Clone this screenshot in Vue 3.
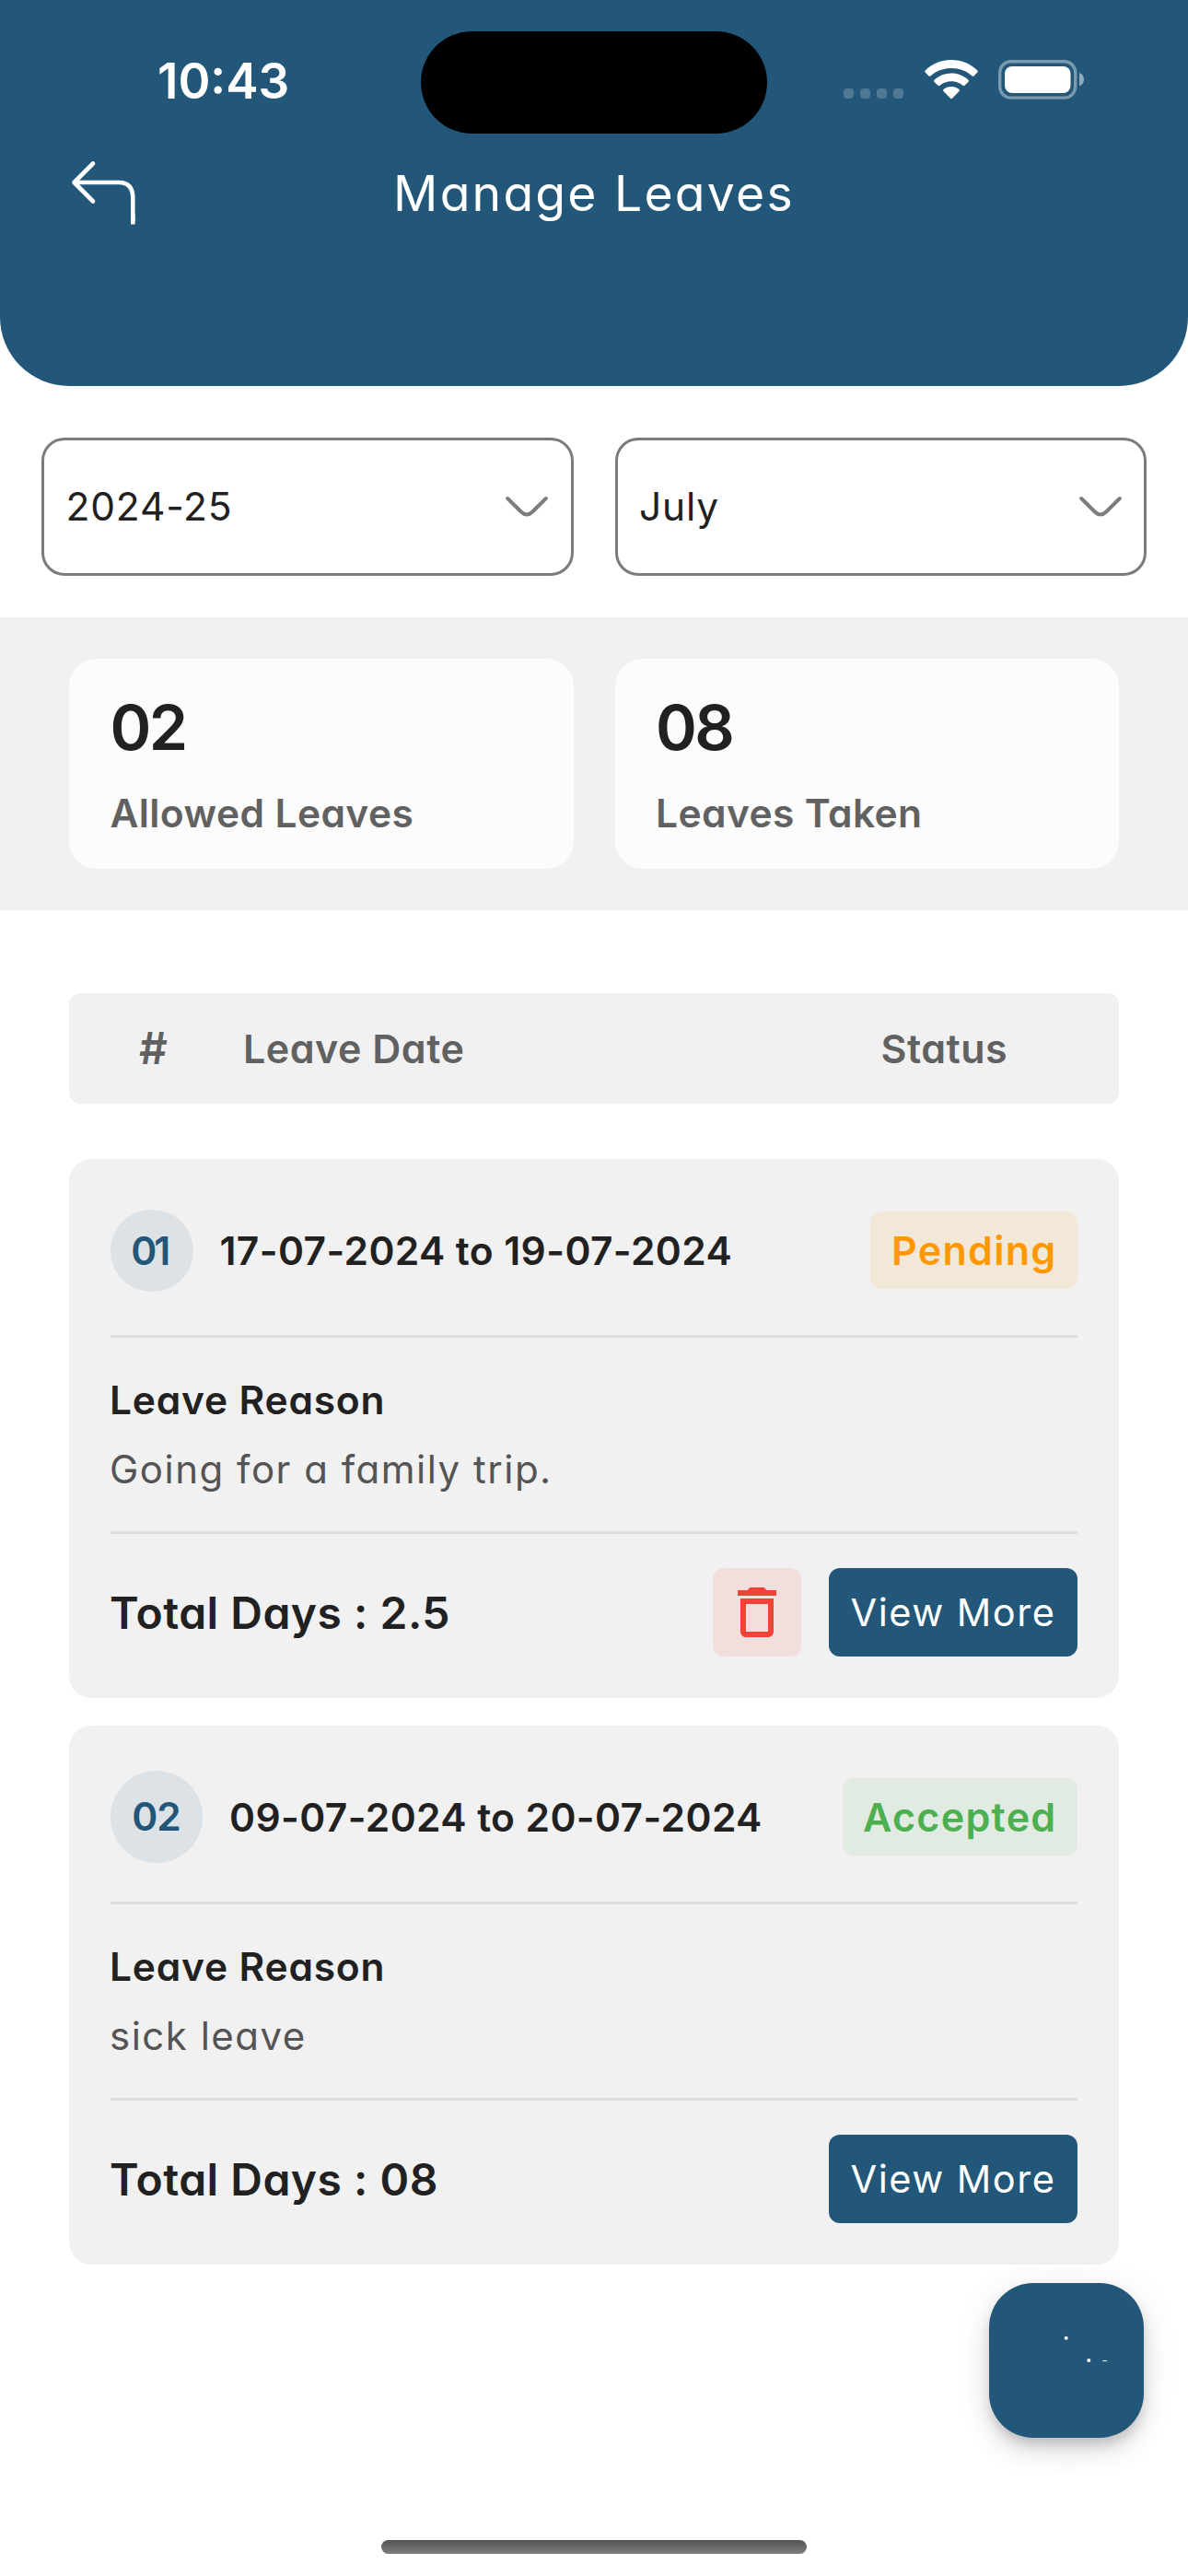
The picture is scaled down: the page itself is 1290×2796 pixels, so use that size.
<script setup>
const filters = ['2024-25', 'July']

const stats = [
  { value: '02', label: 'Allowed Leaves' },
  { value: '08', label: 'Leaves Taken' },
]

const leaves = [
  {
    no: '01',
    dates: '17-07-2024 to 19-07-2024',
    status: 'Pending',
    reason: 'Going for a family trip.',
    days: '2.5',
    removable: true,
  },
  {
    no: '02',
    dates: '09-07-2024 to 20-07-2024',
    status: 'Accepted',
    reason: 'sick leave',
    days: '08',
    removable: false,
  },
]
</script>

<template>
  <div class="screen">
    <header class="header">
      <div class="status-bar">
        <div class="clock">10:43</div>
        <div class="island"></div>
        <div class="indicators">
          <div class="signal"><i v-for="n in 4" :key="n"></i></div>
          <svg class="wifi" width="58" height="43" viewBox="0 0 58 43" fill="#fff">
            <path d="M29 0C40.200 0 50.300 4.400 57.300 11.400Q58.300 12.500 57.300 13.600L53.500 17.400Q52.500 18.300 51.400 17.300C45.500 11.900 37.700 8.900 29 8.900S12.500 11.900 6.600 17.300Q5.500 18.300 4.500 17.400L.7 13.600Q-.3 12.500.7 11.400C7.700 4.400 17.800 0 29 0Z" />
            <path d="M29 14.600C36.100 14.600 42.600 17.300 47.400 21.700Q48.500 22.800 47.400 23.900L43.500 27.700Q42.500 28.600 41.400 27.700C38 24.900 33.700 23.300 29 23.300S20 24.900 16.600 27.700Q15.500 28.600 14.500 27.700L10.600 23.900Q9.500 22.800 10.600 21.700C15.400 17.300 21.900 14.600 29 14.600Z" />
            <path d="M29 28.900C32.300 28.900 35.300 30 37.500 31.900Q38.600 33 37.500 34.100L30 41.700Q29 42.600 28 41.700L20.500 34.100Q19.400 33 20.500 31.900C22.700 30 25.700 28.900 29 28.900Z" />
          </svg>
          <svg class="battery" width="94" height="43" viewBox="0 0 94 43">
            <rect x="1.700" y="1.700" width="82" height="39.400" rx="12" fill="none" stroke="#fff" stroke-opacity=".4" stroke-width="3.400" />
            <rect x="7" y="7" width="71.500" height="29" rx="8" fill="#fff" />
            <path d="M88 14c3.200 1.200 5 4 5 7.300s-1.800 6.100-5 7.300z" fill="#fff" fill-opacity=".5" />
          </svg>
        </div>
      </div>
      <div class="title-bar">
        <svg class="back" width="72" height="72" viewBox="0 0 72 72" fill="none" stroke="#fff" stroke-width="4.600" stroke-linecap="round" stroke-linejoin="round">
          <path d="M26 4.500 5.500 25 26 45.500M6.500 25H54Q69.300 25 69.300 42V67" />
          <path d="M69.300 60V70.500" stroke-linecap="butt" />
        </svg>
        <h1>Manage Leaves</h1>
      </div>
    </header>

    <section class="filters">
      <div v-for="f in filters" :key="f" class="select">
        <span>{{ f }}</span>
        <svg width="46" height="24" viewBox="0 0 46 24" fill="none" stroke="#7d7d7d" stroke-width="4" stroke-linecap="round">
          <path d="M2.200 3 16.800 17.500Q23 23.500 29.200 17.500L43.800 3" />
        </svg>
      </div>
    </section>

    <section class="stats">
      <div v-for="s in stats" :key="s.label" class="stat">
        <div class="stat-value">{{ s.value }}</div>
        <div class="stat-label">{{ s.label }}</div>
      </div>
    </section>

    <main class="list">
      <div class="list-head">
        <span class="col-no">#</span>
        <span class="col-date">Leave Date</span>
        <span class="col-status">Status</span>
      </div>

      <article v-for="l in leaves" :key="l.no" class="card">
        <div class="card-top">
          <div class="badge" :class="'n' + l.no">{{ l.no }}</div>
          <div class="dates">{{ l.dates }}</div>
          <div class="status" :class="l.status.toLowerCase()">{{ l.status }}</div>
        </div>
        <div class="card-reason">
          <div class="reason-title">Leave Reason</div>
          <div class="reason">{{ l.reason }}</div>
        </div>
        <div class="card-bottom">
          <div class="total">Total Days : {{ l.days }}</div>
          <div v-if="l.removable" class="delete">
            <svg width="72" height="72" viewBox="0 0 24 24" fill="#f44336">
              <path d="M6 19c0 1.100.9 2 2 2h8c1.100 0 2-.9 2-2V7H6v12zM8 9h8v10H8V9zm7.500-5l-1-1h-5l-1 1H5v2h14V4h-3.500z" />
            </svg>
          </div>
          <div class="view">View More</div>
        </div>
      </article>
    </main>

    <div class="fab">
      <svg width="168" height="168" viewBox="0 0 168 168" fill="#fff">
        <circle cx="83.700" cy="59.700" r="2" />
        <circle cx="108.300" cy="84" r="2" />
        <rect x="123.300" y="84" width="4.800" height="1" />
      </svg>
    </div>
    <div class="home-indicator"></div>
  </div>
</template>

<style>
body {
  margin: 0;
  background: #fff;
}
</style>

<style scoped>
.screen {
  position: relative;
  width: 1290px;
  height: 2796px;
  overflow: hidden;
  background: #fff;
  color: #212121;
  font-family: Inter, "Noto Sans", sans-serif;
  font-feature-settings: "cv11";
  font-size: 42.5px;
  white-space: nowrap;
}
.header {
  box-sizing: border-box;
  height: 419.4px;
  background: #225779;
  border-radius: 0 0 75px 75px;
  color: #fff;
}
.status-bar {
  display: flex;
  height: 145px;
}
.clock {
  width: 457px;
  box-sizing: border-box;
  padding-left: 171px;
  font-size: 53px;
  font-weight: 600;
  line-height: 176px;
}
.island {
  width: 376px;
  height: 111px;
  margin-top: 33.5px;
  border-radius: 56px;
  background: #000;
}
.indicators {
  display: flex;
  align-items: flex-start;
  padding: 64.5px 0 0 83px;
}
.signal {
  display: flex;
  gap: 7px;
  margin: 31.5px 22.5px 0 0;
}
.signal i {
  width: 11px;
  height: 11px;
  border-radius: 4px;
  background: rgba(255, 255, 255, 0.2);
}
.wifi {
  margin-right: 22.5px;
}
.title-bar {
  display: grid;
  grid-template-columns: 150px 1fr 150px;
  align-items: center;
  height: 129px;
}
.back {
  justify-self: end;
  margin: 0 3.5px 2px 0;
}
h1 {
  margin: 0;
  text-align: center;
  font-size: 53.5px;
  font-weight: 400;
  line-height: 60px;
  letter-spacing: 2.2px;
}
.filters {
  display: grid;
  grid-template-columns: 1fr 1fr;
  gap: 45px;
  padding: 55.6px 45px 45px;
}
.select {
  display: flex;
  box-sizing: border-box;
  align-items: center;
  justify-content: space-between;
  height: 150px;
  padding: 0 24.5px 0 23.5px;
  border: 3px solid #7b7b7b;
  border-radius: 25px;
  letter-spacing: 0.8px;
}
.stats {
  display: grid;
  grid-template-columns: 1fr 1fr;
  gap: 45px;
  padding: 45px 75px;
  background: #f1f1f1;
}
.stat {
  box-sizing: border-box;
  height: 228px;
  padding: 37.5px 44.5px 0;
  border-radius: 30px;
  background: #fcfcfc;
}
.stat-value {
  font-size: 68px;
  font-weight: 600;
  line-height: 75px;
  letter-spacing: -2.5px;
}
.stat-label {
  margin-top: 26px;
  color: #616161;
  font-weight: 600;
  line-height: 60px;
  letter-spacing: 0.4px;
}
.list {
  padding: 90px 75px 0;
}
.list-head {
  display: flex;
  align-items: center;
  height: 120px;
  margin-bottom: 60.5px;
  border-radius: 12px;
  background: #f1f1f1;
  color: #616161;
  font-size: 43px;
  font-weight: 600;
  letter-spacing: 0.5px;
}
.col-no {
  width: 113px;
  padding-left: 76px;
  font-size: 48px;
}
.col-date {
  flex: 1;
}
.col-status {
  width: 258.5px;
}
.card {
  box-sizing: border-box;
  height: 585px;
  margin-bottom: 30px;
  padding: 0 45px;
  border-radius: 24px;
  background: #f1f1f1;
}
.card-top {
  display: flex;
  align-items: center;
  height: 100px;
  padding: 49px 0 41.5px;
  border-bottom: 3px solid #dedede;
  font-size: 42.5px;
  font-weight: 600;
}
.badge {
  box-sizing: border-box;
  width: 100px;
  height: 100px;
  margin-right: 29px;
  padding-right: 1px;
  border-radius: 50%;
  background: #dde2e6;
  color: #225779;
  line-height: 100px;
  text-align: center;
  letter-spacing: -1px;
}
.badge.n01 {
  width: 89.5px;
  height: 89.5px;
  padding-right: 5px;
  line-height: 89.5px;
  letter-spacing: -3px;
}
.dates {
  flex: 1;
  letter-spacing: 0.4px;
}
.status {
  height: 84px;
  padding: 0 22.5px;
  border-radius: 12px;
  font-size: 43px;
  line-height: 84px;
  letter-spacing: 1.3px;
}
.pending {
  background: #f2e8d8;
  color: #ff9800;
}
.accepted {
  background: #e1ebe1;
  color: #4caf50;
}
.card-reason {
  height: 172.3px;
  padding-top: 37.7px;
  border-bottom: 3px solid #dedede;
  line-height: 60px;
}
.reason-title {
  margin: 0 0 15px -1px;
  font-weight: 600;
  letter-spacing: 0.8px;
}
.reason {
  margin-left: -1px;
  color: #545454;
  font-size: 42px;
  letter-spacing: 1.5px;
}
.card-bottom {
  display: flex;
  align-items: center;
  height: 96px;
  padding-top: 37.3px;
}
.total {
  flex: 1;
  margin-left: -1px;
  font-size: 48px;
  font-weight: 600;
  letter-spacing: 0.5px;
}
.delete {
  display: flex;
  align-items: center;
  justify-content: center;
  width: 96px;
  height: 96px;
  margin-right: 30px;
  border-radius: 12px;
  background: #f2dfdd;
}
.view {
  width: 270px;
  border-radius: 12px;
  background: #225779;
  color: #fff;
  font-size: 41.5px;
  line-height: 96px;
  text-align: center;
  letter-spacing: 1.5px;
}
.fab {
  position: absolute;
  right: 48px;
  top: 2478px;
  width: 168px;
  height: 168px;
  border-radius: 48px;
  background: #225779;
  box-shadow:
    0 9px 15px -3px rgba(0, 0, 0, 0.2),
    0 18px 30px rgba(0, 0, 0, 0.07),
    0 3px 40px rgba(0, 0, 0, 0.08);
}
.home-indicator {
  position: absolute;
  left: 414px;
  bottom: 24px;
  width: 462px;
  height: 15px;
  border-radius: 8px;
  background: linear-gradient(#505350, #7e7e7e);
}
</style>
